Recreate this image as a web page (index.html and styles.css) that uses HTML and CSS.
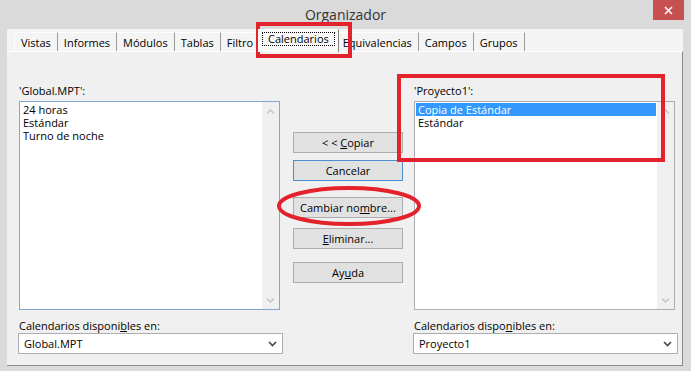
FILE: index.html
```html
<!DOCTYPE html>
<html lang="es">
<head>
    <meta charset="UTF-8">
    <meta name="viewport" content="width=device-width, initial-scale=1.0">
    <title>Organizador</title>
    <link rel="stylesheet" href="styles.css">
</head>
<body>

    <div class="window">
        <div class="titlebar">
            <span class="title">Organizador</span>
            <button class="close" aria-label="Cerrar">
                <svg width="9" height="9" viewBox="0 0 9 9"><path d="M1 1 L8 8 M8 1 L1 8" stroke="#fff" stroke-width="1.5" fill="none"/></svg>
            </button>
        </div>

        <div class="client">
            <div class="tabs">
                <span class="tab first">Vistas</span>
                <span class="tab">Informes</span>
                <span class="tab">Módulos</span>
                <span class="tab">Tablas</span>
                <span class="tab">Filtro</span>
                <span class="tab active"><span class="focus">Calendarios</span></span>
                <span class="tab">Equivalencias</span>
                <span class="tab">Campos</span>
                <span class="tab">Grupos</span>
            </div>

            <div class="panel">
                <div class="col">
                    <label class="caption">'Global.MPT':</label>
                    <div class="listbox focused">
                        <ul class="items">
                            <li>24 horas</li>
                            <li>Estándar</li>
                            <li>Turno de noche</li>
                        </ul>
                        <div class="scroll">
                            <svg width="9" height="5" viewBox="0 0 9 5"><path d="M1 4.5 L4.5 1 L8 4.5" stroke="#c4c4c4" stroke-width="1.3" fill="none"/></svg>
                            <svg width="9" height="5" viewBox="0 0 9 5"><path d="M1 0.5 L4.5 4 L8 0.5" stroke="#c4c4c4" stroke-width="1.3" fill="none"/></svg>
                        </div>
                    </div>
                    <label class="caption avail">Calendarios disponi<u>b</u>les en:</label>
                    <div class="combo">
                        <span>Global.MPT</span>
                        <svg width="9" height="6" viewBox="0 0 9 6"><path d="M1 1 L4.5 4.5 L8 1" stroke="#4a4a4a" stroke-width="1.7" fill="none"/></svg>
                    </div>
                </div>

                <div class="buttons">
                    <button class="btn">&lt; &lt; <u>C</u>opiar</button>
                    <button class="btn default">Cancelar</button>
                    <button class="btn rename">Cambiar no<u>m</u>bre...</button>
                    <button class="btn remove"><u>E</u>liminar...</button>
                    <button class="btn help">Ay<u>u</u>da</button>
                </div>

                <div class="col">
                    <label class="caption">'Proyecto1':</label>
                    <div class="listbox">
                        <ul class="items">
                            <li class="selected">Copia de Estándar</li>
                            <li>Estándar</li>
                        </ul>
                        <div class="scroll">
                            <svg width="9" height="5" viewBox="0 0 9 5"><path d="M1 4.5 L4.5 1 L8 4.5" stroke="#c4c4c4" stroke-width="1.3" fill="none"/></svg>
                            <svg width="9" height="5" viewBox="0 0 9 5"><path d="M1 0.5 L4.5 4 L8 0.5" stroke="#c4c4c4" stroke-width="1.3" fill="none"/></svg>
                        </div>
                    </div>
                    <label class="caption avail">Calendarios dispo<u>n</u>ibles en:</label>
                    <div class="combo">
                        <span>Proyecto1</span>
                        <svg width="9" height="6" viewBox="0 0 9 6"><path d="M1 1 L4.5 4.5 L8 1" stroke="#4a4a4a" stroke-width="1.7" fill="none"/></svg>
                    </div>
                </div>
            </div>
        </div>

        <!-- marcas rojas encima del dialogo -->
        <div class="mark mark-tab"></div>
        <div class="mark mark-list"></div>
        <svg class="mark-ring" width="150" height="44" viewBox="0 0 150 44">
            <ellipse cx="75" cy="22" rx="70" ry="18" fill="none" stroke="#e3222b" stroke-width="4"/>
        </svg>
    </div>

</body>
</html>
```

FILE: styles.css
```css
body {
    margin: 0;
    font-family: "Open Sans", "Noto Sans", sans-serif;
    font-size: 11px;
    color: #000;
}
.window {
    position: relative;
    width: 691px;
    height: 371px;
    background-color: #dadada;
    display: flex;
    flex-direction: column;
    overflow: hidden;
}
.titlebar {
    height: 29px;
    display: grid;
    grid-template-columns: 1fr auto 1fr;
    align-items: center;
}
.title {
    grid-column: 2;
    font-size: 14px;
    color: #333;
    padding-bottom: 1px;
}
.close {
    grid-column: 3;
    justify-self: end;
    align-self: start;
    width: 31px;
    height: 20px;
    margin-right: 7px;
    border: none;
    padding: 0;
    background-color: #c75050;
    display: flex;
    align-items: center;
    justify-content: center;
}
.client {
    flex: 1;
    margin: 0 8px 5px 7px;
    background-color: #f0f0f0;
    display: flex;
    flex-direction: column;
}
.tabs {
    height: 22px;
    display: flex;
    align-items: flex-end;
    padding-left: 7px;
    background-color: #f4f4f4;
}
.tab {
    height: 19px;
    box-sizing: border-box;
    padding: 0 6px;
    border-top: 1px solid #fff;
    border-right: 1px solid #9a9a9a;
    display: flex;
    align-items: center;
    white-space: nowrap;
}
.tab.first {
    border-left: 1px solid #fff;
}
.tab.active {
    position: relative;
    z-index: 1;
    height: 23px;
    margin: 0 -2px -1px -2px;
    padding: 0 3px 4px 3px;
    background-color: #f9f9f9;
    border-left: 1px solid #fff;
    border-right: 1px solid #808080;
}
.focus {
    border: 1px dotted #000;
    padding: 0 5px;
    line-height: 12px;
}
.panel {
    flex: 1;
    display: flex;
    gap: 10px;
    padding: 32px 4px 0 11px;
    border-top: 1px solid #fff;
    border-right: 1px solid #8c8c8c;
    border-bottom: 1px solid #8c8c8c;
}
.col {
    width: 265px;
    display: flex;
    flex-direction: column;
}
.caption {
    display: block;
    line-height: 13px;
    padding-left: 1px;
}
.listbox {
    width: 261px;
    height: 209px;
    margin: 4px 0 0 1px;
    box-sizing: border-box;
    border: 1px solid #abadb3;
    background-color: #fff;
    display: flex;
}
.listbox.focused {
    border-color: #86a6d2;
}
.items {
    flex: 1;
    list-style: none;
    margin: 0;
    padding: 1px;
}
.items li {
    line-height: 13px;
    padding-left: 2px;
}
.items li.selected {
    background-color: #3399ff;
    color: #fff;
}
.scroll {
    width: 17px;
    background-color: #f0f0f0;
    display: flex;
    flex-direction: column;
    justify-content: space-between;
    align-items: center;
    padding: 7px 0 6px 0;
}
.avail {
    margin-top: 9px;
}
.combo {
    height: 21px;
    margin-top: 1px;
    box-sizing: border-box;
    border: 1px solid #abadb3;
    background-color: #fff;
    display: flex;
    align-items: center;
    justify-content: space-between;
    padding: 0 5px 0 5px;
}
.buttons {
    width: 110px;
    display: flex;
    flex-direction: column;
    padding-top: 48px;
}
.btn {
    height: 21px;
    padding: 0;
    font-family: inherit;
    font-size: 11px;
    color: #000;
    background-color: #e1e1e1;
    border: 1px solid #adadad;
}
.btn.default {
    margin-top: 7px;
    border-color: #4a90d0;
}
.btn.rename {
    margin-top: 16px;
}
.btn.remove {
    margin-top: 10px;
}
.btn.help {
    margin-top: 13px;
}
.mark {
    position: absolute;
    border: 4px solid #e3222b;
    box-sizing: border-box;
}
.mark-tab {
    left: 256px;
    top: 22px;
    width: 96px;
    height: 36px;
}
.mark-list {
    left: 397px;
    top: 74px;
    width: 268px;
    height: 88px;
}
.mark-ring {
    position: absolute;
    left: 274px;
    top: 184px;
}
```
